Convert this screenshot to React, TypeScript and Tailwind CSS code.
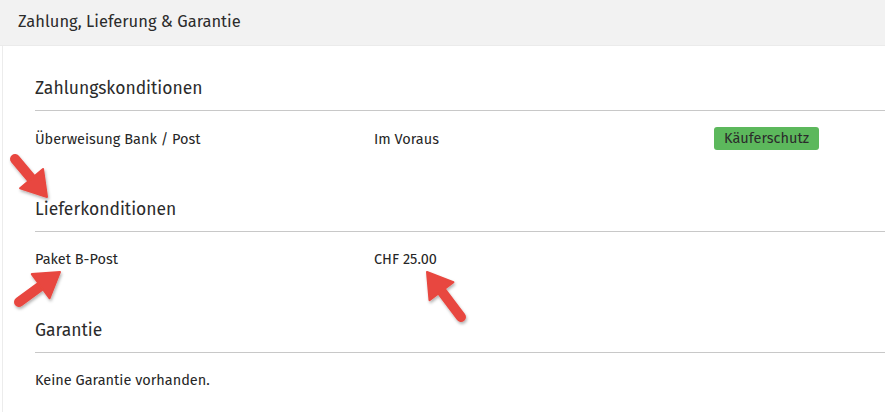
import React from "react";

type Pt = [number, number];

// red callout arrow, drawn from tail to tip
function Arrow({ from, to }: { from: Pt; to: Pt }) {
  const [x1, y1] = from;
  const [x2, y2] = to;
  const dx = x2 - x1, dy = y2 - y1;
  const len = Math.hypot(dx, dy);
  const ux = dx / len, uy = dy / len;
  const px = -uy, py = ux;
  const hl = 24, hw = 15;
  const bx = x2 - ux * hl, by = y2 - uy * hl;
  const head = [
    [x2, y2],
    [bx + px * hw, by + py * hw],
    [bx - px * hw, by - py * hw],
  ].map(p => p.join(",")).join(" ");
  return (
    <g>
      <line x1={x1} y1={y1} x2={bx + ux * 2} y2={by + uy * 2} stroke="#e8473f" strokeWidth={10} strokeLinecap="round" />
      <polygon points={head} fill="#e8473f" strokeLinejoin="round" stroke="#e8473f" strokeWidth={2} />
    </g>
  );
}

const rows = [
  {
    title: "Zahlungskonditionen",
    cells: ["Überweisung Bank / Post", "Im Voraus"],
    badge: "Käuferschutz",
  },
  {
    title: "Lieferkonditionen",
    cells: ["Paket B-Post", "CHF 25.00"],
  },
  {
    title: "Garantie",
    cells: ["Keine Garantie vorhanden."],
  },
];

export default function App() {
  return (
    <div
      className="relative w-[885px] h-[412px] overflow-hidden bg-white text-[#333]"
      style={{ fontFamily: '"Fira Sans", "Open Sans", "Noto Sans", sans-serif' }}
    >
      <div className="h-[46px] bg-[#f2f2f2] border-b border-[#ebebeb] flex items-center px-[18px] text-[16.5px] text-[#2b2b2b]">
        Zahlung, Lieferung &amp; Garantie
      </div>

      <div className="ml-[2px] border-l border-[#ececec] pl-[32px] pt-[32px]">
        {rows.map(r => (
          <section key={r.title} className="h-[121px]">
            <h2 className="text-[17.5px] leading-[22px] text-[#2b2b2b] pb-[10px] border-b border-[#c8c8c8]">
              {r.title}
            </h2>
            <div className="grid grid-cols-[339px_340px_1fr] items-center pt-[16px] text-[14.5px] text-[#262626]">
              <div className="leading-[22px]">{r.cells[0]}</div>
              <div className="leading-[22px]">{r.cells[1] ?? ""}</div>
              <div>
                {r.badge && (
                  <span className="inline-block bg-[#5cb85c] rounded-[3px] px-[10px] py-[2px] text-[14.5px] leading-[19px] text-[#2b2b2b]">
                    {r.badge}
                  </span>
                )}
              </div>
            </div>
          </section>
        ))}
      </div>

      <svg className="absolute inset-0 pointer-events-none" width={885} height={412}>
        <defs>
          <filter id="sh" x="-20%" y="-20%" width="140%" height="140%">
            <feDropShadow dx="1" dy="2" stdDeviation="1.5" floodColor="#000" floodOpacity="0.3" />
          </filter>
        </defs>
        <g filter="url(#sh)">
          <Arrow from={[15, 159]} to={[47, 197]} />
          <Arrow from={[19, 302]} to={[60, 272]} />
          <Arrow from={[461, 317]} to={[427, 272]} />
        </g>
      </svg>
    </div>
  );
}
